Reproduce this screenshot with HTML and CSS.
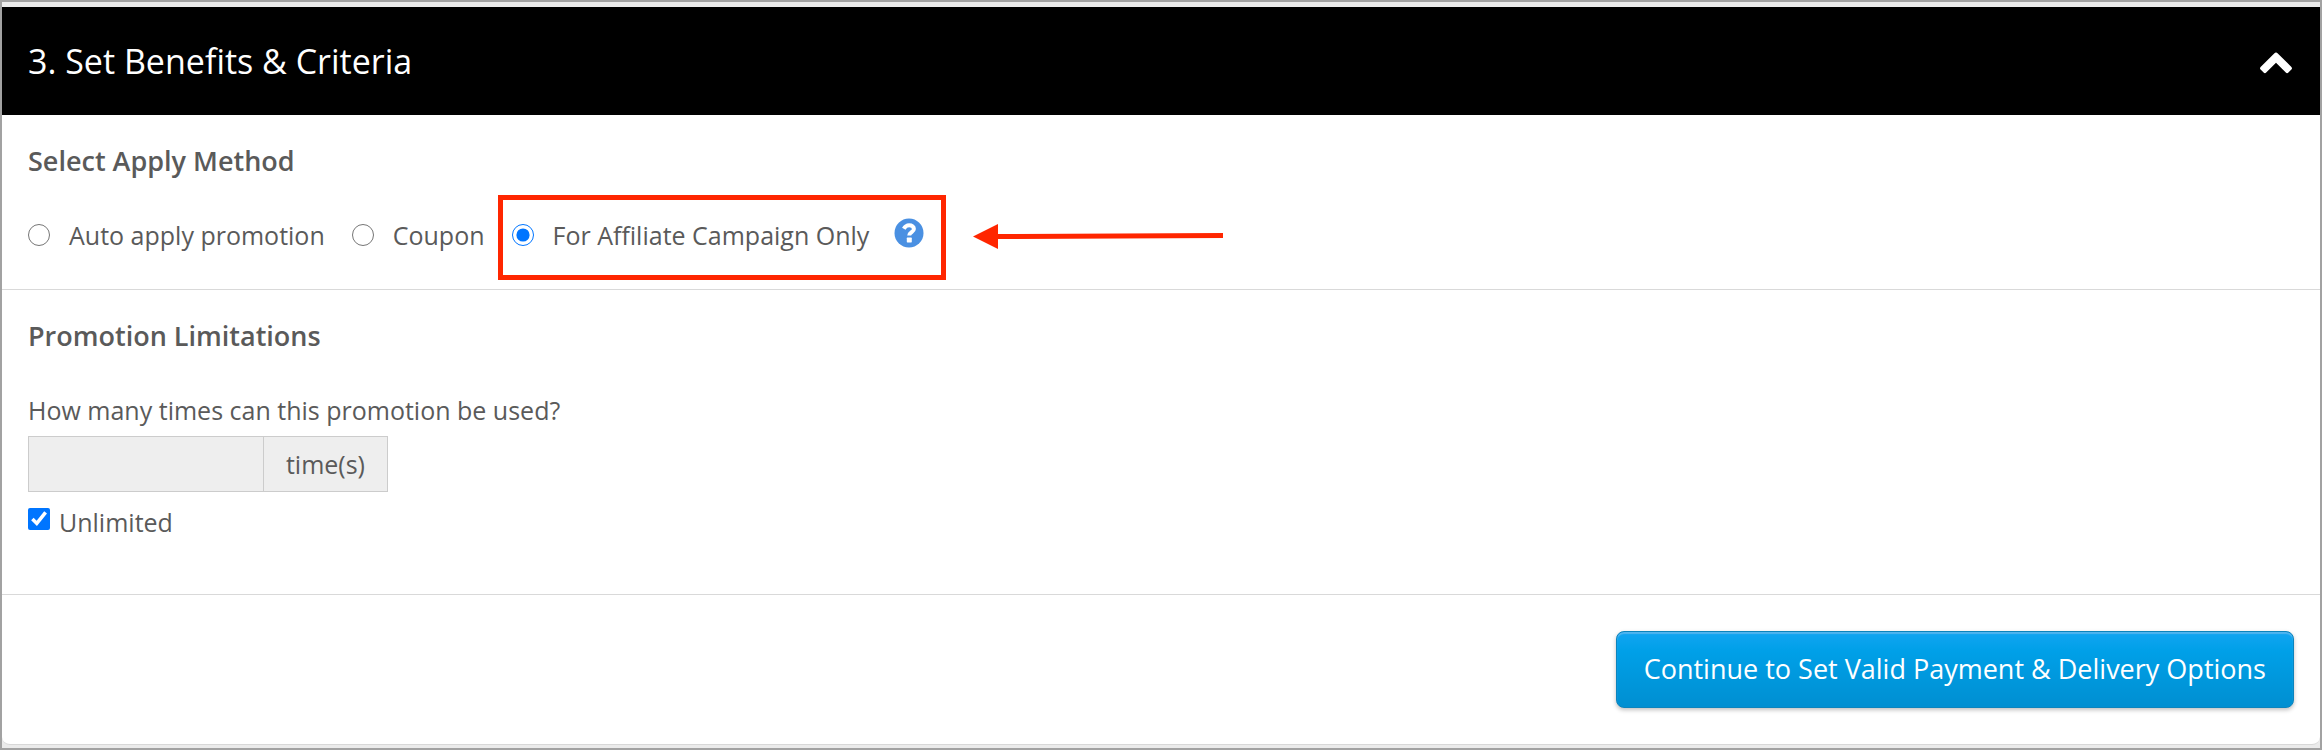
FILE: index.html
```
<!DOCTYPE html>
<html lang="en">
<head>
    <meta charset="UTF-8">
    <meta name="viewport" content="width=device-width, initial-scale=1.0">
    <title>Set Benefits &amp; Criteria</title>
    <link rel="stylesheet" href="styles.css">
</head>
<body>
    <form class="panel">
        <div class="panel-header">
            <h2>3. Set Benefits &amp; Criteria</h2>
            <button type="button" class="collapse" aria-label="Collapse section">
                <svg width="34" height="24" viewBox="0 0 34 24">
                    <path d="M17 1.6 Q18 1.6 18.8 2.4 L32.4 16 Q33.6 17.4 32.4 18.6 L29.4 21.6 Q28 22.8 26.8 21.6 L17 11.8 L7.2 21.6 Q6 22.8 4.6 21.6 L1.6 18.6 Q0.4 17.4 1.6 16 L15.2 2.4 Q16 1.6 17 1.6 Z" fill="#fff"/>
                </svg>
            </button>
        </div>

        <section class="section">
            <h3>Select Apply Method</h3>
            <div class="methods">
                <label class="method"><input type="radio" name="method" value="auto">Auto apply promotion</label>
                <label class="method"><input type="radio" name="method" value="coupon">Coupon</label>
                <div class="affiliate">
                    <label class="method"><input type="radio" name="method" value="affiliate" checked>For Affiliate Campaign Only</label>
                    <button type="button" class="help" aria-label="Help">
                        <svg width="30" height="30" viewBox="0 0 30 30">
                            <circle cx="15" cy="15" r="14.5" fill="#4a90e2"/>
                            <path d="M9.8 10.7 C11.2 8.2 13 7.2 15.1 7.2 C18 7.2 19.9 8.7 19.9 10.9 C19.9 14 15.2 14.2 15.2 17.6" fill="none" stroke="#fff" stroke-width="4"/>
                            <rect x="12.8" y="19.6" width="5" height="4.8" rx="0.6" fill="#fff"/>
                        </svg>
                    </button>
                    <!-- arrow pointing at the highlighted option -->
                    <svg class="arrow" width="250" height="26" viewBox="0 0 250 26">
                        <path d="M24 13.5 L250 12.5" stroke="#ff2600" stroke-width="5"/>
                        <path d="M0 13.5 L25 1 V26 Z" fill="#ff2600"/>
                    </svg>
                </div>
            </div>
        </section>

        <section class="section limits">
            <h3>Promotion Limitations</h3>
            <label class="question" for="times">How many times can this promotion be used?</label>
            <div class="input-group">
                <input type="text" id="times" name="times" disabled>
                <span class="addon">time(s)</span>
            </div>
            <label class="unlimited"><input type="checkbox" name="unlimited" checked>Unlimited</label>
        </section>

        <div class="panel-footer">
            <button type="submit" class="continue">Continue to Set Valid Payment &amp; Delivery Options</button>
        </div>
    </form>
</body>
</html>
```
FILE: styles.css
```
* {
    box-sizing: border-box;
}
body {
    margin: 0;
    min-height: 100vh;
    padding: 5px 0 3px;
    border: 2px solid #a2a2a2;
    background-color: #ebebeb;
    font-family: "Open Sans", sans-serif;
    font-size: 25px;
    line-height: 36px;
    color: #5a5a5a;
}
h2, h3 {
    margin: 0;
}
.panel {
    background-color: #fff;
    border-bottom: 1px solid #d8d8d8;
    border-radius: 0 0 8px 8px;
}
.panel-header {
    display: flex;
    align-items: center;
    justify-content: space-between;
    margin: 0 -1px;
    padding: 30px 28px 30px 27px;
    background-color: #000;
    color: #fff;
}
.panel-header h2 {
    font-size: 34px;
    font-weight: 400;
    line-height: 48px;
}
.collapse, .help {
    display: flex;
    padding: 0;
    border: none;
    background: none;
    cursor: pointer;
}
.collapse {
    padding-top: 4px;
}
.help {
    padding-bottom: 4px;
}
.section {
    padding: 26px 26px 36px;
    border-bottom: 1px solid #d9d9d9;
}
.section h3 {
    margin-bottom: 36px;
    font-size: 27px;
    font-weight: 600;
    line-height: 40px;
}
.methods {
    display: flex;
    gap: 27px;
}
.method {
    display: flex;
    align-items: center;
    gap: 19px;
}
.method input {
    width: 22px;
    height: 22px;
    margin: 0;
}
/* highlighted option */
.affiliate {
    position: relative;
    display: flex;
    align-items: center;
    gap: 25px;
}
.affiliate::after {
    content: "";
    position: absolute;
    inset: -22px -22px -27px -14px;
    border: 5px solid #ff2600;
    pointer-events: none;
}
.arrow {
    position: absolute;
    top: 6px;
    left: calc(100% + 49px);
}
.limits {
    padding-bottom: 54px;
}
.question {
    display: block;
    margin-bottom: 8px;
}
.input-group {
    display: flex;
    width: 360px;
    margin-bottom: 12px;
    border: 1px solid #ccc;
    background-color: #eee;
}
.input-group input {
    flex: 1;
    min-width: 0;
    padding: 0 12px;
    border: none;
    background: none;
    font: inherit;
}
.addon {
    padding: 9px 22px;
    border-left: 1px solid #ccc;
}
.unlimited {
    display: flex;
    gap: 9px;
}
.unlimited input {
    width: 22px;
    height: 22px;
    margin: 4px 0 0;
}
.panel-footer {
    display: flex;
    justify-content: flex-end;
    padding: 36px 26px;
}
.continue {
    padding: 17px 27px 18px;
    border: 1px solid #0b84bd;
    border-radius: 8px;
    background-image: linear-gradient(#12a5f2, #00a0e8 25%, #008fd1);
    box-shadow: inset 0 2px 1px #4fb4ef, 0 2px 4px rgba(0, 0, 0, 0.25);
    color: #fff;
    font-family: inherit;
    font-size: 27px;
    line-height: 40px;
    cursor: pointer;
}
```
